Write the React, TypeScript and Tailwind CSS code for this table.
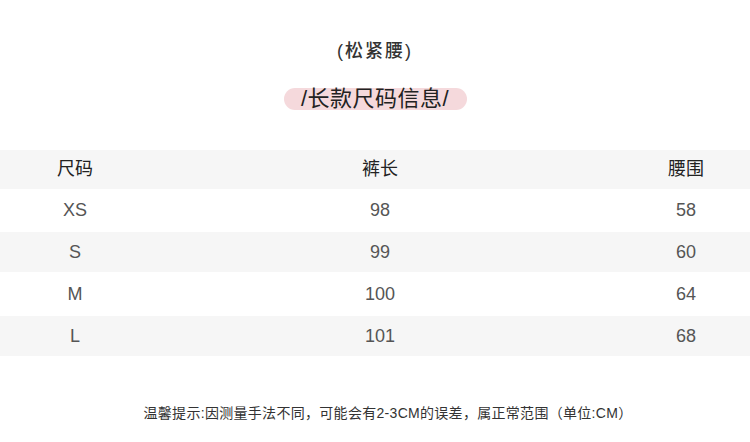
const FONT = '"Liberation Sans", "Noto Sans CJK SC", sans-serif'

const ROWS = [
  { size: 'XS', length: '98', waist: '58', h: 'h-[43px]', bg: 'bg-white' },
  { size: 'S', length: '99', waist: '60', h: 'h-[40px]', bg: 'bg-[#f6f6f6]' },
  { size: 'M', length: '100', waist: '64', h: 'h-[44px]', bg: 'bg-white' },
  { size: 'L', length: '101', waist: '68', h: 'h-[40px]', bg: 'bg-[#f6f6f6]' },
]

function Row({ cells, className, textClass }: { cells: string[]; className: string; textClass: string }) {
  return (
    <div className={`flex items-center ${className} ${textClass}`}>
      <div className="w-[150px] text-center">{cells[0]}</div>
      <div className="w-[460px] text-center">{cells[1]}</div>
      <div className="ml-auto w-[128px] text-center">{cells[2]}</div>
    </div>
  )
}

export default function App() {
  return (
    <div className="w-[750px] h-[442px] bg-white overflow-hidden flex flex-col" style={{ fontFamily: FONT }}>
      <div className="pt-[39px] text-center text-[18px] leading-[24px] font-medium tracking-[2px] text-[#333]">(松紧腰)</div>

      <div className="mt-[25px] flex justify-center">
        <div className="w-[183px] h-[22px] rounded-full bg-[#f5d9dc] flex items-center justify-center text-[22px] leading-[22px] tracking-[0.5px] text-[#222]">
          /长款尺码信息/
        </div>
      </div>

      <div className="mt-[40px]">
        <Row
          cells={['尺码', '裤长', '腰围']}
          className="h-[39px] bg-[#f6f6f6]"
          textClass="text-[18px] text-[#222]"
        />
        {ROWS.map((r) => (
          <Row
            key={r.size}
            cells={[r.size, r.length, r.waist]}
            className={`${r.h} ${r.bg}`}
            textClass="text-[18px] font-light text-[#555]"
          />
        ))}
      </div>

      <div className="mt-[47px] pl-[26px] text-center text-[14px] leading-[20px] tracking-[0.3px] text-[#333]">
        温馨提示:因测量手法不同，可能会有2-3CM的误差，属正常范围（单位:CM）
      </div>
    </div>
  )
}
